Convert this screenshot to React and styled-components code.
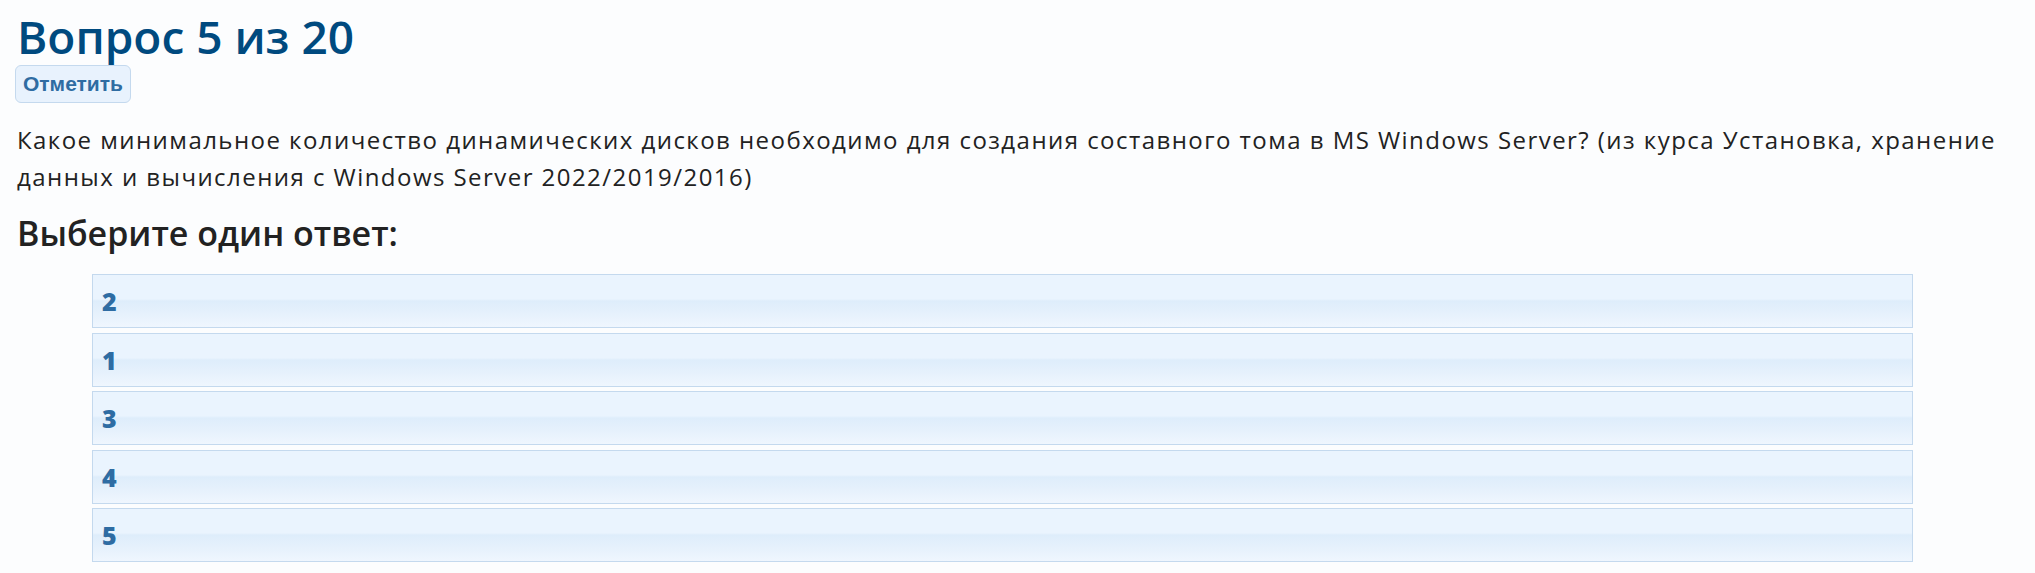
import React from 'react'
import styled, { createGlobalStyle } from 'styled-components'

const GlobalStyle = createGlobalStyle`
    html, body {
        margin: 0;
        padding: 0;
        background: #fcfdfe;
    }
`

const Page = styled.div`
    padding: 10px 17px 0 17px;
    font-family: "Open Sans", Inter, sans-serif;
`
const Title = styled.h1`
    margin: 0;
    font-size: 46px;
    line-height: 52px;
    font-weight: 600;
    color: #004a7f;
`
const MarkButton = styled.button`
    display: block;
    margin: 3px 0 0 -2px;
    height: 38px;
    padding: 0 7px;
    border: 1px solid #c4d9ee;
    border-radius: 6px;
    background: #e8f2fd;
    color: #2f6ca2;
    font-family: "Liberation Sans", Arial, sans-serif;
    font-weight: bold;
    font-size: 21px;
`
const QuestionText = styled.p`
    margin: 18px 0 0 0;
    font-size: 24px;
    line-height: 37px;
    letter-spacing: 1.45px;
    font-weight: 400;
    color: #222;
`
const Prompt = styled.h3`
    margin: 18px 0 0 0;
    font-size: 34px;
    line-height: 40px;
    font-weight: 600;
    color: #222;
`
const Answers = styled.div`
    display: flex;
    flex-direction: column;
    gap: 4.5px;
    margin: 21px 0 0 75px;
    width: 1821px;
`
const Answer = styled.div`
    box-sizing: border-box;
    height: 54px;
    display: flex;
    align-items: center;
    padding-left: 9px;
    border: 1px solid #c4d9ee;
    background: linear-gradient(
        to bottom,
        #eaf4fe 0%,
        #eaf4fe 46%,
        #deedfb 50%,
        #e6f1fc 75%,
        #eff6fe 100%
    );
    color: #2e6ca3;
    font-weight: 800;
    font-size: 25px;
`

const options = ['2', '1', '3', '4', '5']

function App() {
    return (
        <Page>
            <GlobalStyle />
            <Title>Вопрос 5 из 20</Title>
            <MarkButton>Отметить</MarkButton>
            <QuestionText>
                Какое минимальное количество динамических дисков необходимо для создания составного тома в MS Windows Server? (из курса Установка, хранение данных и вычисления с Windows Server 2022/2019/2016)
            </QuestionText>
            <Prompt>Выберите один ответ:</Prompt>
            <Answers>
                {options.map(o => (
                    <Answer key={o}>{o}</Answer>
                ))}
            </Answers>
        </Page>
    )
}

export default App
